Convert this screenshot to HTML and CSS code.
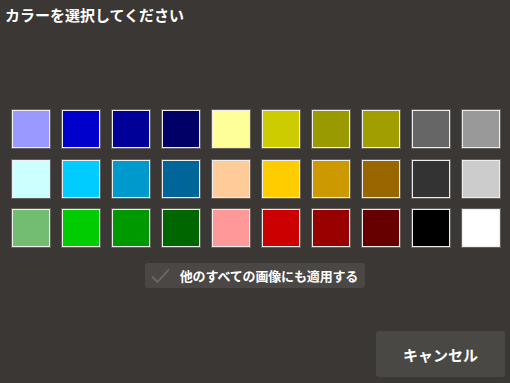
FILE: index.html
```html
<!DOCTYPE html>
<html lang="ja">

<head>
    <meta charset="UTF-8">
    <meta name="viewport" content="width=device-width, initial-scale=1.0">
    <title>カラーを選択してください</title>
    <link rel="stylesheet" href="styles.css">
</head>

<body>
    <h1 class="title">カラーを選択してください</h1>

    <div class="palette">
        <!-- 1行目 -->
        <div class="swatch c-9999ff"></div>
        <div class="swatch c-0000cc"></div>
        <div class="swatch c-000099"></div>
        <div class="swatch c-000066"></div>
        <div class="swatch c-ffff99"></div>
        <div class="swatch c-cccc00"></div>
        <div class="swatch c-999900"></div>
        <div class="swatch c-a09e00"></div>
        <div class="swatch c-666666"></div>
        <div class="swatch c-999999"></div>
        <!-- 2行目 -->
        <div class="swatch c-ccffff"></div>
        <div class="swatch c-00ccff"></div>
        <div class="swatch c-0099cc"></div>
        <div class="swatch c-006699"></div>
        <div class="swatch c-ffcc99"></div>
        <div class="swatch c-ffcc00"></div>
        <div class="swatch c-cc9900"></div>
        <div class="swatch c-996600"></div>
        <div class="swatch c-333333"></div>
        <div class="swatch c-cccccc"></div>
        <!-- 3行目 -->
        <div class="swatch c-73bd73"></div>
        <div class="swatch c-00cc00"></div>
        <div class="swatch c-009900"></div>
        <div class="swatch c-006600"></div>
        <div class="swatch c-ff9999"></div>
        <div class="swatch c-cc0000"></div>
        <div class="swatch c-990000"></div>
        <div class="swatch c-660000"></div>
        <div class="swatch c-000000"></div>
        <div class="swatch c-ffffff"></div>
    </div>

    <label class="apply-all">
        <svg class="check" width="19" height="16" viewBox="0 0 19 16">
            <path d="M1 8.5 L6.5 14 L18 1.5" fill="none" stroke="#6d6a66" stroke-width="1.8"/>
        </svg>
        <span>他のすべての画像にも適用する</span>
    </label>

    <div class="footer">
        <button class="cancel">キャンセル</button>
    </div>
</body>

</html>
```

FILE: styles.css
```css
body {
    font-family: 'Noto Sans CJK JP', 'Noto Sans', sans-serif;
    background-color: #3b3734;
    margin: 0;
    height: 383px;
    display: flex;
    flex-direction: column;
    color: #fff;
}

.title {
    margin: 0;
    padding: 5px 5px 0;
    font-size: 15px;
    line-height: 20px;
    font-weight: bold;
}

.palette {
    margin-top: 85px;
    padding-left: 12px;
    display: grid;
    grid-template-columns: repeat(10, 38px);
    grid-auto-rows: 38px;
    column-gap: 12px;
    row-gap: 11.5px;
}

.swatch {
    box-sizing: border-box;
    border: 1px solid #eeeeee;
    box-shadow: 0 0 0 1px rgba(255, 255, 255, 0.2);
}

.c-9999ff { background: #9999ff; }
.c-0000cc { background: #0000cc; }
.c-000099 { background: #000099; }
.c-000066 { background: #000066; }
.c-ffff99 { background: #ffff99; }
.c-cccc00 { background: #cccc00; }
.c-999900 { background: #999900; }
.c-a09e00 { background: #a09e00; }
.c-666666 { background: #666666; }
.c-999999 { background: #999999; }
.c-ccffff { background: #ccffff; }
.c-00ccff { background: #00ccff; }
.c-0099cc { background: #0099cc; }
.c-006699 { background: #006699; }
.c-ffcc99 { background: #ffcc99; }
.c-ffcc00 { background: #ffcc00; }
.c-cc9900 { background: #cc9900; }
.c-996600 { background: #996600; }
.c-333333 { background: #333333; }
.c-cccccc { background: #cccccc; }
.c-73bd73 { background: #73bd73; }
.c-00cc00 { background: #00cc00; }
.c-009900 { background: #009900; }
.c-006600 { background: #006600; }
.c-ff9999 { background: #ff9999; }
.c-cc0000 { background: #cc0000; }
.c-990000 { background: #990000; }
.c-660000 { background: #660000; }
.c-000000 { background: #000000; }
.c-ffffff { background: #ffffff; }

.apply-all {
    align-self: center;
    margin-top: 16px;
    height: 25px;
    padding: 0 7px 0 6px;
    display: flex;
    align-items: center;
    gap: 10px;
    background-color: #4a4744;
    border-radius: 3px;
    font-size: 13px;
    font-weight: bold;
    letter-spacing: -0.15px;
}

.check {
    display: block;
}

.footer {
    margin-top: auto;
    display: flex;
    justify-content: flex-end;
    padding: 0 5px 6px 0;
}

.cancel {
    width: 129px;
    height: 46px;
    background-color: #4a4845;
    color: #fff;
    border: none;
    border-radius: 3px;
    font-family: inherit;
    font-size: 15px;
    font-weight: bold;
    padding: 0;
}
```
